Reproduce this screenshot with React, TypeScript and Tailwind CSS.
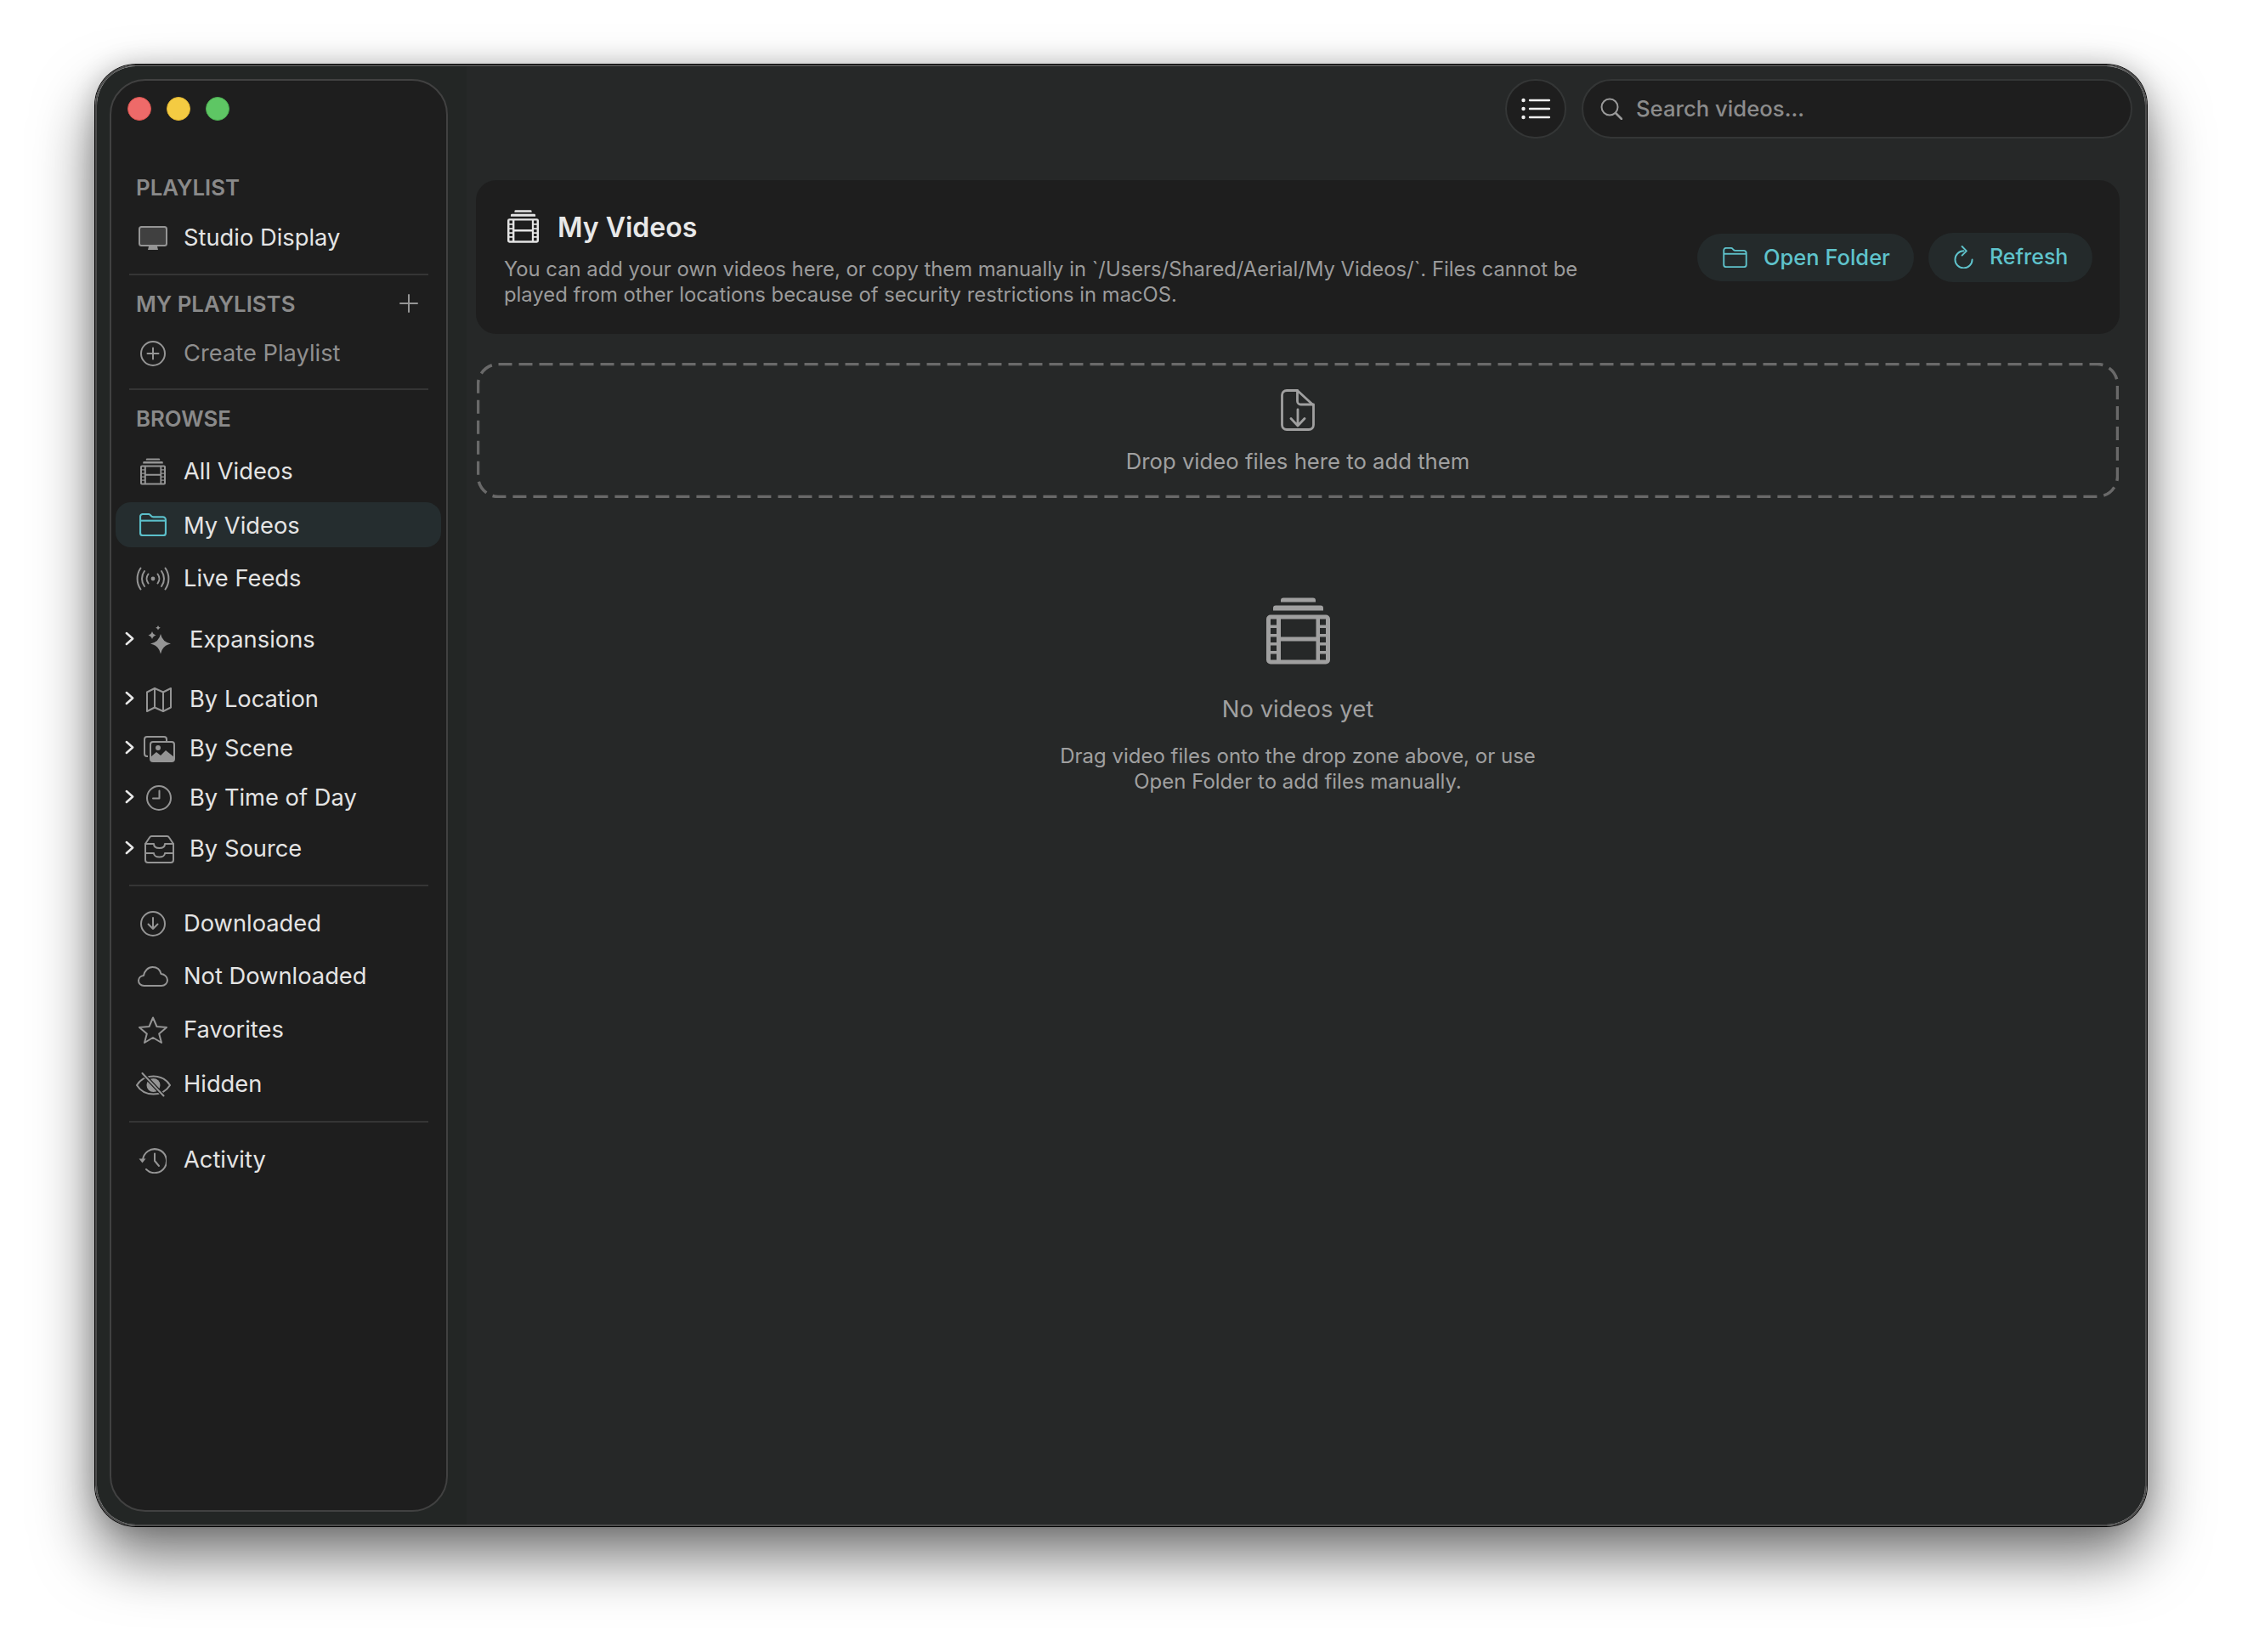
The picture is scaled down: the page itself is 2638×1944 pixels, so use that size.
import React from "react";

const filmPath =
  "M20 0h35a3 3 0 0 1 3 3v2H17V3a3 3 0 0 1 3-3z M11 9h53a3 3 0 0 1 3 3v3H8v-3a3 3 0 0 1 3-3z M5 20h65a5 5 0 0 1 5 5v48a5 5 0 0 1-5 5H5a5 5 0 0 1-5-5V25a5 5 0 0 1 5-5z M5 25v7h7v-7z M5 35.500v7h7v-7z M5 46v6.500h7V46z M5 56v6.500h7V56z M5 66v7h7v-7z M63 25v7h7v-7z M63 35.500v7h7v-7z M63 46v6.500h7V46z M63 56v6.500h7V56z M63 66v7h7v-7z M17 25v21h41.500V25z M17 51v22h41.500V51z";

const FilmStack = ({ className }: { className: string }) => (
  <svg viewBox="0 0 75 78" className={className} fill="currentColor">
    <path d={filmPath} fillRule="evenodd" />
  </svg>
);

const FolderIcon = ({ className }: { className: string }) => (
  <svg viewBox="0 0 34 28" className={className} fill="none" stroke="currentColor" strokeWidth="2.200" strokeLinejoin="round">
    <path d="M1.500 6V4a3 3 0 0 1 3-3h7c1.500 0 2.200 1 3 2s1.500 1.500 3 1.500H29a3.500 3.500 0 0 1 3.500 3.500v16a3 3 0 0 1-3 3h-25a3 3 0 0 1-3-3z" />
    <path d="M1.500 9h31" />
  </svg>
);

const iconProps = { fill: "none", stroke: "currentColor", strokeLinecap: "round", strokeLinejoin: "round" } as const;

const MonitorIcon = () => (
  <svg viewBox="0 0 34 28" className="w-[34px] h-[28px]">
    <rect x="1" y="1" width="32" height="22" rx="2.500" fill="#404040" stroke="#959595" strokeWidth="2" />
    <path d="M12 24h10l1 4H11z" fill="#959595" />
  </svg>
);

const CirclePlusIcon = () => (
  <svg viewBox="0 0 30 30" className="w-[30px] h-[30px]" {...iconProps} strokeWidth="2">
    <circle cx="15" cy="15" r="14" />
    <path d="M15 8.500v13M8.500 15h13" />
  </svg>
);

const LiveIcon = () => (
  <svg viewBox="0 0 40 28" className="w-[40px] h-[28px]" {...iconProps} strokeWidth="2">
    <circle cx="20" cy="14" r="2.400" fill="currentColor" stroke="none" />
    <path d="M14.500 8.500a9 9 0 0 0 0 11M25.500 8.500a9 9 0 0 1 0 11" />
    <path d="M10 5a15 15 0 0 0 0 18M30 5a15 15 0 0 1 0 18" />
    <path d="M5.500 1.500a22 22 0 0 0 0 25M34.500 1.500a22 22 0 0 1 0 25" />
  </svg>
);

const SparkleIcon = () => (
  <svg viewBox="0 0 28 34" className="w-[28px] h-[34px]" fill="currentColor">
    <path d="M16 10Q18 19.500 28 21.500 18 23.500 16 33.500 14 23.500 4 21.500 14 19.500 16 10z" />
    <path d="M6 7Q7 10.500 10.500 11.500 7 12.500 6 16 5 12.500 1.500 11.500 5 10.500 6 7z" />
    <path d="M13 0Q13.500 2.300 15.800 2.800 13.500 3.300 13 5.600 12.500 3.300 10.200 2.800 12.500 2.300 13 0z" />
  </svg>
);

const MapIcon = () => (
  <svg viewBox="0 0 30 29" className="w-[30px] h-[29px]" {...iconProps} strokeWidth="2">
    <path d="M1 5.500 10 1l10 4.500L29 1v22.500L20 28l-10-4.500L1 28z" />
    <path d="M10 1v22.500M20 5.500V28" />
  </svg>
);

const SceneIcon = () => (
  <svg viewBox="0 0 37 31" className="w-[37px] h-[31px]">
    <path d="M5 24H4a3 3 0 0 1-3-3V4a3 3 0 0 1 3-3h20a3 3 0 0 1 3 3v2" fill="none" stroke="#959595" strokeWidth="2" />
    <rect x="8" y="7" width="28" height="23" rx="3" fill="none" stroke="#959595" strokeWidth="2" />
    <path d="M8 30v-5l7-6 5 4 6-6 10 8v5z" fill="#959595" />
    <circle cx="17" cy="14" r="3" fill="#959595" />
  </svg>
);

const ClockIcon = () => (
  <svg viewBox="0 0 30 30" className="w-[30px] h-[30px]" {...iconProps} strokeWidth="2">
    <circle cx="15" cy="15" r="14" />
    <path d="M15.500 6.500v9H8" />
  </svg>
);

const TrayIcon = () => (
  <svg viewBox="0 0 35 33" className="w-[35px] h-[33px]" {...iconProps} strokeWidth="2">
    <path d="M1 10 6 2.500A3 3 0 0 1 8.500 1h18a3 3 0 0 1 2.500 1.500L34 10v19a3 3 0 0 1-3 3H4a3 3 0 0 1-3-3z" />
    <path d="M1 10h10c0 3 2.500 5 6.500 5s6.500-2 6.500-5h10" />
    <path d="M1 21h10c0 2.500 2.500 4.500 6.500 4.500S24 23.500 24 21h10" />
  </svg>
);

const DownloadIcon = () => (
  <svg viewBox="0 0 30 30" className="w-[30px] h-[30px]" {...iconProps} strokeWidth="2">
    <circle cx="15" cy="15" r="14" />
    <path d="M15 8v13M9.500 15.500 15 21l5.500-5.500" />
  </svg>
);

const CloudIcon = () => (
  <svg viewBox="0 0 36 24" className="w-[36px] h-[24px]" {...iconProps} strokeWidth="2">
    <path d="M7.500 23C3.800 23 1 20.400 1 17c0-3.200 2.600-5.800 6-6 1-5.500 5-10 10.500-10 5 0 8.800 3 10 8 4 .4 7.500 3.500 7.500 7.200 0 3.900-3 6.800-7 6.800z" />
  </svg>
);

const StarIcon = () => (
  <svg viewBox="0 0 34 32" className="w-[34px] h-[32px]" {...iconProps} strokeWidth="2">
    <path d="M17 1.500 21.500 12 33 13l-8.800 7.500L27 31l-10-6-10 6 2.800-10.500L1 13l11.500-1z" />
  </svg>
);

const EyeSlashIcon = () => (
  <svg viewBox="0 0 41 29" className="w-[41px] h-[29px]" {...iconProps} strokeWidth="2">
    <path d="M1 15C5 8.500 12 4.500 20.500 4.500S36 8.500 40 15c-4 6.500-11 10.500-19.500 10.500S5 21.500 1 15z" />
    <circle cx="20.500" cy="15" r="8" fill="currentColor" stroke="none" />
    <path d="M8 1.500 33 28" stroke="#1e1e1e" strokeWidth="4.500" />
    <path d="M7.500 1 32.500 27.500" />
  </svg>
);

const HistoryIcon = () => (
  <svg viewBox="0 0 34 31" className="w-[34px] h-[31px] -ml-[3px]" {...iconProps} strokeWidth="2">
    <path d="M6 15.500a14 14 0 1 1 4 10.500" />
    <path d="M1.500 13.500h8l-4 5z" fill="currentColor" stroke="none" />
    <path d="M20 7.500v8.500l5 6" />
  </svg>
);

const Chevron = () => (
  <svg viewBox="0 0 12 18" className="w-[11px] h-[17px] -mt-[4px]" fill="none" stroke="#e8e8e8" strokeWidth="2.800" strokeLinecap="round" strokeLinejoin="round">
    <path d="M2 2l8 7-8 7" />
  </svg>
);

const Item = ({ icon, label, mt, muted }: { icon: React.ReactNode; label: string; mt: string; muted?: boolean }) => (
  <div className={`flex items-center h-[44px] ml-[27px] gap-[14px] ${mt}`}>
    <span className="flex justify-center items-center w-[44px] text-[#959595]">{icon}</span>
    <span className={`text-[27.3px] ${muted ? "text-[#8f8f8f]" : "text-[#e4e4e4]"}`}>{label}</span>
  </div>
);

const Group = ({ icon, label, mt }: { icon: React.ReactNode; label: string; mt: string }) => (
  <div className={`flex items-center h-[44px] ml-[13px] ${mt}`}>
    <span className="flex justify-center items-center w-[16px]">
      <Chevron />
    </span>
    <span className="flex justify-center items-center w-[44px] ml-[5px] text-[#959595]">{icon}</span>
    <span className="ml-[14px] text-[27.3px] text-[#e4e4e4]">{label}</span>
  </div>
);

const SectionTitle = ({ children, mt }: { children: React.ReactNode; mt: string }) => (
  <div className={`flex items-center h-[40px] ml-[29px] pt-[2px] text-[25.8px] font-semibold text-[#8a8a8a] ${mt}`}>{children}</div>
);

const Divider = ({ mt }: { mt: string }) => <div className={`h-[2px] ml-[21px] w-[352px] bg-[#353535] ${mt}`} />;

const Sidebar = () => (
  <aside className="w-[398px] h-full rounded-[42px] bg-[#1e1e1e] border-2 border-[#414141]">
    <div className="flex items-center gap-[18px] ml-[19px] mt-[19px]">
      <span className="w-[28px] h-[28px] rounded-full bg-[#ee6a69] border border-[#d9534f]" />
      <span className="w-[28px] h-[28px] rounded-full bg-[#f4cb42] border border-[#e0b32f]" />
      <span className="w-[28px] h-[28px] rounded-full bg-[#5ec664] border border-[#4cae52]" />
    </div>
    <SectionTitle mt="mt-[58px]">PLAYLIST</SectionTitle>
    <Item icon={<MonitorIcon />} label="Studio Display" mt="mt-[18px]" />
    <Divider mt="mt-[20px]" />
    <div className="flex items-center justify-between pr-[33px]">
      <SectionTitle mt="mt-[13px]">MY PLAYLISTS</SectionTitle>
      <svg viewBox="0 0 22 22" className="w-[22px] h-[22px] mt-[13px] text-[#959595]" {...iconProps} strokeWidth="2">
        <path d="M11 1v20M1 11h20" />
      </svg>
    </div>
    <Item icon={<CirclePlusIcon />} label="Create Playlist" mt="mt-[17px]" muted />
    <Divider mt="mt-[19px]" />
    <SectionTitle mt="mt-[13px]">BROWSE</SectionTitle>
    <Item icon={<FilmStack className="w-[30px] h-[32px]" />} label="All Videos" mt="mt-[21px]" />
    <div className="flex items-center h-[53px] w-[383px] ml-[5px] mt-[14px] pl-[22px] gap-[14px] rounded-[18px] bg-[#252d2f]">
      <span className="flex justify-center items-center w-[44px] text-[#5bbfca]">
        <FolderIcon className="w-[34px] h-[27px]" />
      </span>
      <span className="pt-[3px] text-[27.3px] text-[#e4e4e4]">My Videos</span>
    </div>
    <Item icon={<LiveIcon />} label="Live Feeds" mt="mt-[15px]" />
    <Group icon={<SparkleIcon />} label="Expansions" mt="mt-[28px]" />
    <Group icon={<MapIcon />} label="By Location" mt="mt-[26px]" />
    <Group icon={<SceneIcon />} label="By Scene" mt="mt-[14px]" />
    <Group icon={<ClockIcon />} label="By Time of Day" mt="mt-[14px]" />
    <Group icon={<TrayIcon />} label="By Source" mt="mt-[16px]" />
    <Divider mt="mt-[20px]" />
    <Item icon={<DownloadIcon />} label="Downloaded" mt="mt-[22px]" />
    <Item icon={<CloudIcon />} label="Not Downloaded" mt="mt-[18px]" />
    <Item icon={<StarIcon />} label="Favorites" mt="mt-[19px]" />
    <Item icon={<EyeSlashIcon />} label="Hidden" mt="mt-[20px]" />
    <Divider mt="mt-[21px]" />
    <Item icon={<HistoryIcon />} label="Activity" mt="mt-[22px]" />
  </aside>
);

const Toolbar = () => (
  <div className="flex justify-end items-center gap-[18px] -mr-[15px]">
    <button className="flex justify-center items-center w-[72px] h-[70px] rounded-full bg-[#1e1e1e] border-2 border-[#343636]">
      <svg viewBox="0 0 34 26" className="w-[34px] h-[26px] text-[#efefef]" {...iconProps} strokeWidth="2.400">
        <path d="M10 3h23M10 13h23M10 23h23" />
        <circle cx="2.500" cy="3" r="2.200" fill="currentColor" stroke="none" />
        <circle cx="2.500" cy="13" r="2.200" fill="currentColor" stroke="none" />
        <circle cx="2.500" cy="23" r="2.200" fill="currentColor" stroke="none" />
      </svg>
    </button>
    <div className="flex items-center w-[648px] h-[70px] pl-[20px] gap-[16px] rounded-full bg-[#1e1e1e] border-2 border-[#343636]">
      <svg viewBox="0 0 26 26" className="w-[26px] h-[26px] text-[#9a9a9a]" {...iconProps} strokeWidth="2">
        <circle cx="11" cy="11" r="9.500" />
        <path d="m18 18 7 7" strokeWidth="2.600" />
      </svg>
      <span className="text-[25.7px] font-medium text-[#8c8c8c]">Search videos...</span>
    </div>
  </div>
);

const HeaderCard = () => (
  <section className="flex items-center justify-between h-[181px] mt-[49px] pl-[33px] pr-[32px] rounded-[24px] bg-[#1e1e1e]">
    <div className="w-[1275px] mt-[2px]">
      <div className="flex items-center gap-[22px] pl-[4px]">
        <FilmStack className="w-[37px] h-[39px] text-[#e4e4e4]" />
        <h1 className="mt-[2px] text-[32px] leading-[40px] font-semibold text-[#e8e8e8]">My Videos</h1>
      </div>
      <p className="mt-[14px] text-[23.8px] leading-[30px] text-[#9b9b9b]">
        You can add your own videos here, or copy them manually in `/Users/Shared/Aerial/My Videos/`. Files cannot be played from other locations because of security restrictions in macOS.
      </p>
    </div>
    <div className="flex items-center gap-[17px] text-[#5fc3cc]">
      <button className="flex items-center h-[56px] w-[255px] pl-[30px] gap-[19px] rounded-full bg-[#242a2b]">
        <FolderIcon className="w-[29px] h-[24px]" />
        <span className="text-[25.5px] font-medium mt-[1px]">Open Folder</span>
      </button>
      <button className="flex items-center h-[58px] w-[193px] pl-[30px] gap-[19px] rounded-full bg-[#242a2b]">
        <svg viewBox="0 0 24 28" className="w-[23px] h-[27px]" {...iconProps} strokeWidth="2">
          <path d="M22.500 17A10.500 10.500 0 1 1 12 6.500" />
          <path d="m10 1 5.500 5.500L10 12" />
        </svg>
        <span className="text-[25px] font-medium mt-[1px]">Refresh</span>
      </button>
    </div>
  </section>
);

const DropZone = () => (
  <section className="relative flex flex-col items-center h-[159px] mt-[34px] mx-[1px] pt-[31px] text-[#a0a0a0]">
    <svg className="absolute inset-0 w-full h-full text-[#696969]" fill="none">
      <rect x="1.500" y="1.500" width="1929" height="156" rx="24" stroke="currentColor" strokeWidth="3.500" strokeDasharray="16 8" />
    </svg>
    <svg viewBox="0 0 40 49" className="w-[40px] h-[49px]" {...iconProps} strokeWidth="2.800">
      <path d="M7 1.500h12.500L38.500 19v23a5.500 5.500 0 0 1-5.500 5.500H7A5.500 5.500 0 0 1 1.500 42V7A5.500 5.500 0 0 1 7 1.500z" />
      <path d="M19.500 1.500V14a4 4 0 0 0 4 4h15" />
      <path d="M20 24v19M12 34.500l8 8.500 8-8.500" />
    </svg>
    <p className="mt-[20px] text-[25.7px] leading-[32px]">Drop video files here to add them</p>
  </section>
);

const EmptyState = () => (
  <section className="flex flex-col items-center mt-[117px] text-[#a0a0a0]">
    <FilmStack className="w-[75px] h-[79px]" />
    <p className="mt-[33px] text-[27.5px] leading-[38px]">No videos yet</p>
    <p className="mt-[22px] text-center text-[24px] leading-[30px]">
      Drag video files onto the drop zone above, or use
      <br />
      Open Folder to add files manually.
    </p>
  </section>
);

export default function App() {
  return (
    <div className="w-[2638px] h-[1944px] pt-[76px] pl-[112px] bg-white font-['Inter',sans-serif]">
      <div className="flex w-[2414px] h-[1720px] rounded-[48px] overflow-hidden border-2 border-[#4d4d4d] shadow-[0_0_0_1px_#000,0_36px_70px_rgba(0,0,0,0.55),0_0_30px_rgba(0,0,0,0.18)]">
        <div className="w-[435px] h-full pl-[15px] pt-[15px] pb-[15px] bg-[#232625]">
          <Sidebar />
        </div>
        <main className="flex-1 pl-[11px] pr-[30px] pt-[15px] bg-[#262828]">
          <Toolbar />
          <HeaderCard />
          <DropZone />
          <EmptyState />
        </main>
      </div>
    </div>
  );
}
